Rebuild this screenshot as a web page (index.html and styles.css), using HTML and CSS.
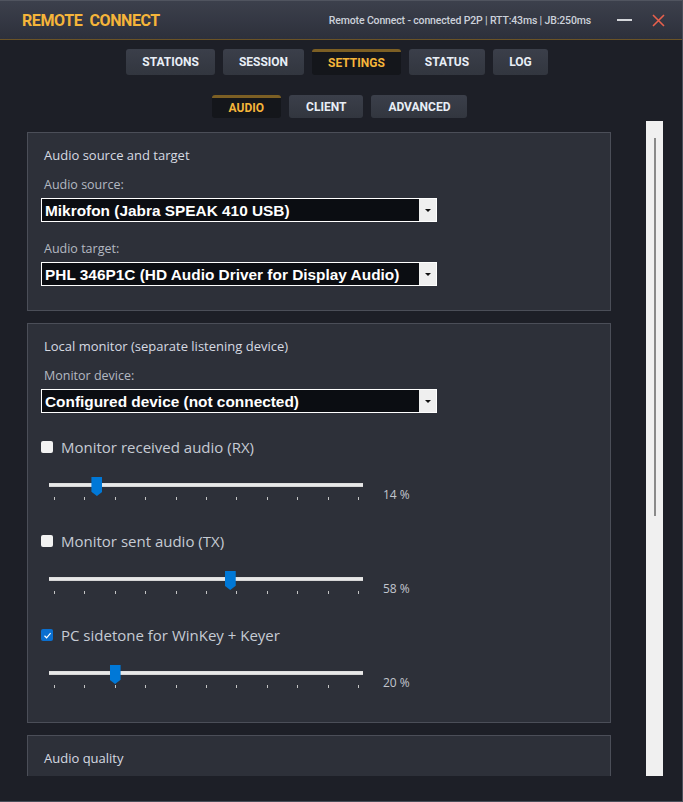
FILE: index.html
```html
<!DOCTYPE HTML>
<html lang="en-US">
<head>
    <meta charset="UTF-8">
    <title>Remote Connect - Settings</title>
    <link rel="stylesheet" href="styles.css">
</head>
<body>
    <div class="window">
        <header class="titlebar">
            <div class="brand">REMOTE&nbsp; CONNECT</div>
            <div class="status">Remote Connect - connected P2P | RTT:43ms | JB:250ms</div>
            <span class="minimize"></span>
            <svg class="close" width="13" height="13" viewBox="0 0 13 13">
                <path d="M1 1 L12 12 M12 1 L1 12" stroke="#e8604c" stroke-width="1.6" fill="none" />
            </svg>
        </header>

        <nav class="tabs main-tabs">
            <span class="tab">STATIONS</span>
            <span class="tab">SESSION</span>
            <span class="tab active">SETTINGS</span>
            <span class="tab">STATUS</span>
            <span class="tab">LOG</span>
        </nav>

        <nav class="tabs sub-tabs">
            <span class="tab active">AUDIO</span>
            <span class="tab">CLIENT</span>
            <span class="tab">ADVANCED</span>
        </nav>

        <div class="scroller">
            <div class="content">
                <section class="panel">
                    <h2 class="panel-title">Audio source and target</h2>
                    <div class="field-label">Audio source:</div>
                    <div class="select">
                        <span class="select-value">Mikrofon (Jabra SPEAK 410 USB)</span>
                        <span class="select-btn"><i class="arrow"></i></span>
                    </div>
                    <div class="field-label">Audio target:</div>
                    <div class="select">
                        <span class="select-value">PHL 346P1C (HD Audio Driver for Display Audio)</span>
                        <span class="select-btn"><i class="arrow"></i></span>
                    </div>
                </section>

                <section class="panel monitor">
                    <h2 class="panel-title">Local monitor (separate listening device)</h2>
                    <div class="field-label">Monitor device:</div>
                    <div class="select">
                        <span class="select-value">Configured device (not connected)</span>
                        <span class="select-btn"><i class="arrow"></i></span>
                    </div>

                    <label class="check"><span class="box"></span>Monitor received audio (RX)</label>
                    <div class="slider">
                        <div class="track">
                            <div class="ticks"><i></i><i></i><i></i><i></i><i></i><i></i><i></i><i></i><i></i><i></i><i></i></div>
                            <span class="thumb" style="--v: 14"></span>
                        </div>
                        <span class="value">14 %</span>
                    </div>

                    <label class="check"><span class="box"></span>Monitor sent audio (TX)</label>
                    <div class="slider">
                        <div class="track">
                            <div class="ticks"><i></i><i></i><i></i><i></i><i></i><i></i><i></i><i></i><i></i><i></i><i></i></div>
                            <span class="thumb" style="--v: 58"></span>
                        </div>
                        <span class="value">58 %</span>
                    </div>

                    <label class="check"><span class="box checked"><svg width="9" height="9" viewBox="0 0 9 9"><path d="M1.5 4.8 L3.6 6.8 L7.6 2.2" stroke="#fff" stroke-width="1.2" fill="none" /></svg></span>PC sidetone for WinKey + Keyer</label>
                    <div class="slider">
                        <div class="track">
                            <div class="ticks"><i></i><i></i><i></i><i></i><i></i><i></i><i></i><i></i><i></i><i></i><i></i></div>
                            <span class="thumb" style="--v: 20"></span>
                        </div>
                        <span class="value">20 %</span>
                    </div>
                </section>

                <section class="panel">
                    <h2 class="panel-title">Audio quality</h2>
                </section>
            </div>
            <div class="scrollbar"><div class="scroll-thumb"></div></div>
        </div>
    </div>
</body>
</html>
```

FILE: styles.css
```css
body {
    margin: 0;
    background: #1d1f27;
}

.window {
    width: 682px;
    height: 801px;
    background: #1d1f27;
    border-right: 1px solid #4a4e5a;
    border-bottom: 1px solid #4a4e5a;
    overflow: hidden;
    font-family: "Open Sans", sans-serif;
}

/* title bar */
.titlebar {
    height: 38px;
    display: flex;
    align-items: center;
    padding: 0 0 0 22px;
    background: linear-gradient(#3c404c, #2d303b);
    border-top: 1px solid #50545f;
    border-bottom: 1px solid #6b5326;
}

.brand {
    font-family: Roboto, sans-serif;
    font-weight: bold;
    font-size: 16px;
    letter-spacing: -0.4px;
    color: #f5b53a;
    padding-top: 1px;
}

.status {
    margin-left: auto;
    font-family: Roboto, sans-serif;
    font-weight: 500;
    font-size: 10.5px;
    letter-spacing: -0.15px;
    color: #ccd1da;
    padding-top: 1px;
}

.minimize {
    width: 15px;
    height: 2px;
    background: #d4d6da;
    margin-left: 26px;
}

.close {
    margin-left: 20px;
    margin-right: 17px;
}

/* tabs */
.tabs {
    display: flex;
    justify-content: center;
    gap: 8px;
    padding-right: 8px;
}

.main-tabs {
    margin-top: 9px;
}

.sub-tabs {
    margin-top: 20px;
    padding-right: 3px;
}

.tab {
    box-sizing: border-box;
    height: 26px;
    line-height: 27px;
    padding: 0 17px;
    border-radius: 3px;
    background: linear-gradient(#3b3f4a, #32363f);
    color: #e8eef6;
    font-family: Roboto, sans-serif;
    font-weight: bold;
    font-size: 12px;
}

.main-tabs .tab {
    padding: 0 16px;
}

.sub-tabs .tab {
    height: 23px;
    line-height: 24px;
}

.tab.active {
    background: #14161b;
    color: #f5b53a;
    border-top: 3px solid #7c5f24;
    line-height: 23px;
}

.sub-tabs .tab.active {
    line-height: 20px;
}

/* scroll area */
.scroller {
    margin-top: 3px;
    height: 655px;
    overflow: hidden;
    display: flex;
}

.content {
    width: 584px;
    padding: 11px 0 0 27px;
}

.scrollbar {
    width: 17px;
    margin-left: 35px;
    background: #f0f0f0;
    position: relative;
}

.scroll-thumb {
    position: absolute;
    left: 8px;
    top: 17px;
    width: 2px;
    height: 378px;
    background: #8a8a8a;
}

/* panels */
.panel {
    background: #2d3039;
    border: 1px solid #4b4e58;
    padding: 13px 13px 24px;
    margin-bottom: 12px;
}

.panel.monitor {
    padding-bottom: 33px;
}

.panel-title {
    margin: 0;
    padding-left: 3px;
    font-size: 13px;
    font-weight: normal;
    line-height: 19px;
    color: #d6dae2;
}

.field-label {
    margin-top: 12px;
    padding-left: 3px;
    font-size: 12.5px;
    line-height: 16px;
    color: #b4b9c2;
}

.select {
    display: flex;
    width: 394px;
    height: 22px;
    margin-top: 5px;
    border: 1px solid #ffffff;
    background: #0b0d12;
}

.select + .field-label {
    margin-top: 19px;
}

.select-value {
    flex: 1;
    padding-left: 3px;
    line-height: 23px;
    font-family: "Liberation Sans", Arial, sans-serif;
    font-weight: bold;
    font-size: 15.4px;
    color: #ffffff;
}

.select-btn {
    width: 17px;
    background: #efefef;
    display: flex;
    align-items: center;
    justify-content: center;
}

.arrow {
    width: 0;
    height: 0;
    border-left: 3px solid transparent;
    border-right: 3px solid transparent;
    border-top: 3px solid #111;
}

/* checkbox rows */
.check {
    display: flex;
    align-items: center;
    height: 20px;
    margin-top: 30px;
    font-size: 15px;
    color: #c6cbd4;
}

.select + .check {
    margin-top: 24px;
}

.box {
    width: 12px;
    height: 12px;
    margin-right: 8px;
    border-radius: 2px;
    background: #f2f2f2;
    display: flex;
    align-items: center;
    justify-content: center;
}

.box.checked {
    background: #0a6fd0;
}

/* sliders */
.slider {
    display: flex;
    height: 30px;
    margin-top: 14px;
    padding-left: 8px;
}

.track {
    width: 314px;
    position: relative;
    background: linear-gradient(transparent 12px, #d6d6d6 12px, #e8e8e8 13px, #e8e8e8 15px, #d6d6d6 15px, #d6d6d6 16px, transparent 16px);
}

.ticks {
    position: absolute;
    left: 5px;
    top: 26px;
    width: 305px;
    display: flex;
    justify-content: space-between;
}

.ticks i {
    width: 1px;
    height: 3px;
    background: #c4c4c4;
}

.thumb {
    position: absolute;
    top: 6px;
    left: calc(var(--v) * 3.03px);
    width: 11px;
    height: 19px;
    background: #0078d7;
    clip-path: polygon(0 0, 100% 0, 100% 78%, 50% 100%, 0 78%);
}

.value {
    margin-left: 20px;
    padding-top: 16px;
    font-size: 12px;
    line-height: 16px;
    color: #c2c6ce;
}
```
